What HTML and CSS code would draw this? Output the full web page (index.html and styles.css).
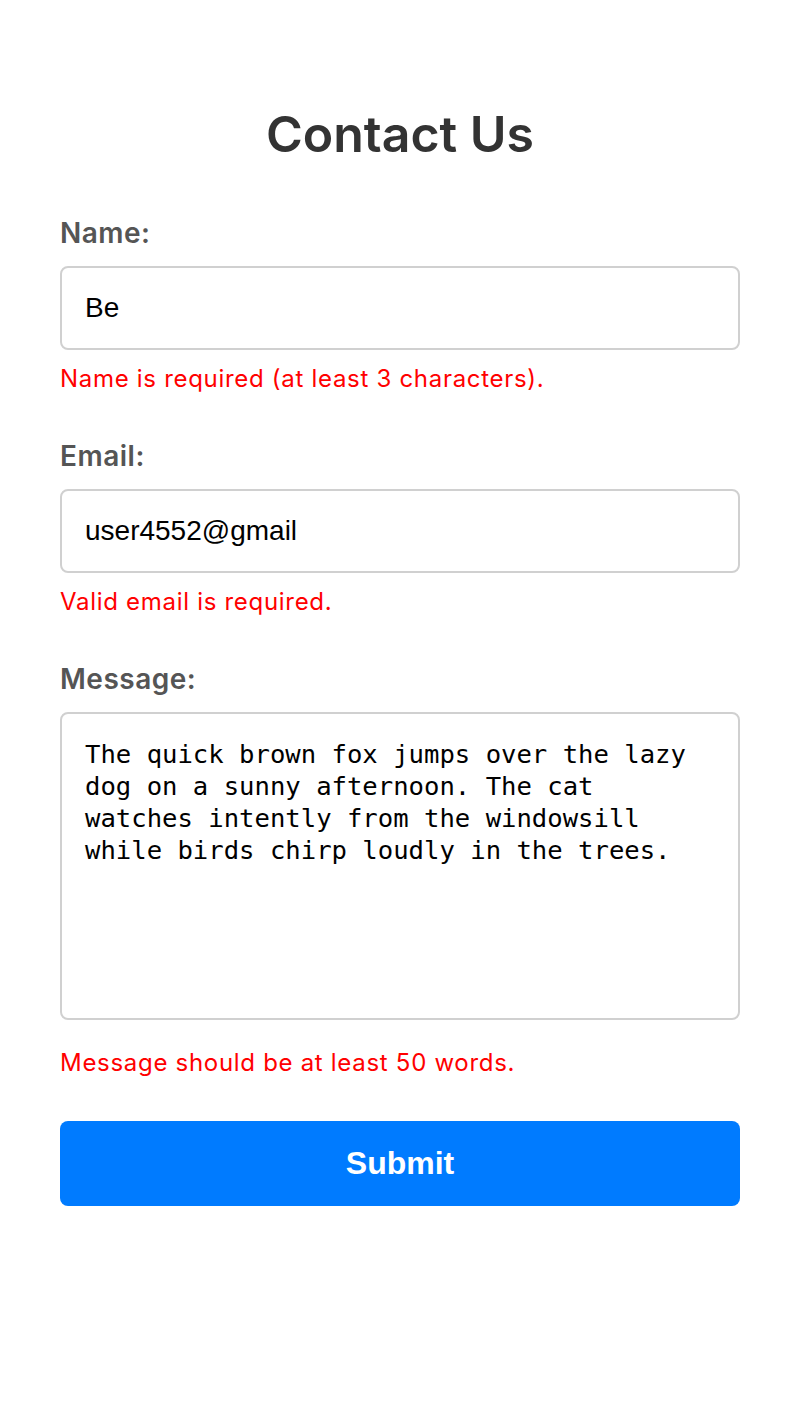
FILE: index.html
```html
<!DOCTYPE html>
<html lang="en">
<head>
<meta charset="utf-8">
<title>Contact Us</title>
<link rel="stylesheet" href="styles.css">
</head>
<body>
<main class="page">
  <h1 class="title">Contact Us</h1>
  <form class="form">
    <div class="field">
      <label class="label" for="name">Name:</label>
      <input class="input" id="name" type="text" value="Be">
      <p class="error">Name is required (at least 3 characters).</p>
    </div>
    <div class="field">
      <label class="label" for="email">Email:</label>
      <input class="input" id="email" type="text" value="user4552@gmail">
      <p class="error">Valid email is required.</p>
    </div>
    <div class="field field--last">
      <label class="label" for="message">Message:</label>
      <textarea class="textarea" id="message">The quick brown fox jumps over the lazy dog on a sunny afternoon. The cat watches intently from the windowsill while birds chirp loudly in the trees.</textarea>
      <p class="error error--spaced">Message should be at least 50 words.</p>
    </div>
    <button class="submit" type="button">Submit</button>
  </form>
</main>
</body>
</html>
```
FILE: styles.css
```css
html, body {
  margin: 0;
  padding: 0;
  background: #ffffff;
}

.page {
  width: 680px;
  margin: 0 auto;
  padding-top: 103px;
  font-family: "Inter", "Noto Sans", sans-serif;
}

.title {
  margin: 0 0 51px;
  text-align: center;
  font-size: 50px;
  line-height: 62px;
  font-weight: 600;
  color: #333333;
}

.field {
  margin-bottom: 43px;
}

.field--last {
  margin-bottom: 41px;
}

.label {
  display: block;
  font-size: 28px;
  line-height: 34px;
  font-weight: 600;
  letter-spacing: 0.5px;
  color: #555555;
  margin-bottom: 16px;
}

.input {
  display: block;
  width: 100%;
  box-sizing: border-box;
  height: 84px;
  padding: 0 23px;
  border: 2px solid #d0d0d0;
  border-radius: 8px;
  font-family: "Liberation Sans", Arial, sans-serif;
  font-size: 28px;
  color: #000000;
  outline: none;
}

.textarea {
  display: block;
  width: 100%;
  box-sizing: border-box;
  height: 308px;
  margin: 0;
  padding: 24px 23px;
  border: 2px solid #d0d0d0;
  border-radius: 8px;
  font-family: "DejaVu Sans Mono", monospace;
  font-size: 25.6px;
  line-height: 32px;
  color: #000000;
  resize: none;
  outline: none;
}

.error {
  margin: 12px 0 0;
  font-size: 24px;
  line-height: 34px;
  letter-spacing: 0.7px;
  color: #ff0000;
}

.error--spaced {
  margin-top: 26px;
}

.submit {
  display: block;
  width: 100%;
  height: 85px;
  border: none;
  border-radius: 8px;
  background: #007bff;
  color: #ffffff;
  font-family: "Liberation Sans", Arial, sans-serif;
  font-size: 32px;
  font-weight: 700;
}
```
